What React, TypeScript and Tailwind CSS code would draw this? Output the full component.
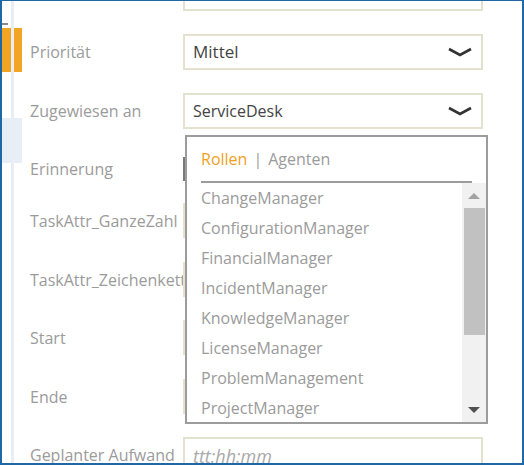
import React from "react";

const ROLES = [
  "ChangeManager",
  "ConfigurationManager",
  "FinancialManager",
  "IncidentManager",
  "KnowledgeManager",
  "LicenseManager",
  "ProblemManagement",
  "ProjectManager",
  "ServiceDesk",
];

function Chevron() {
  return (
    <svg width="24" height="10" viewBox="0 0 24 10" className="shrink-0">
      <polyline points="1,2 12,8 23,2" fill="none" stroke="#333" strokeWidth="2.6" />
    </svg>
  );
}

function Row({ label, mt, h = 36, children }: { label: string; mt: string; h?: number; children?: React.ReactNode }) {
  return (
    <div className={`flex shrink-0 items-center ${mt}`} style={{ height: h }}>
      <div className="w-[161px] shrink-0 overflow-hidden whitespace-nowrap pl-[8px] text-[16px] text-[#9b9b9b]">
        {label}
      </div>
      {children}
    </div>
  );
}

export default function App() {
  return (
    <div
      className="relative flex h-[465px] w-[524px] overflow-hidden border-b-2 border-l-2 border-r-2 border-t border-[#1f68a5] bg-white"
      style={{ fontFamily: '"Open Sans", "Noto Sans", sans-serif' }}
    >
      {/* linke Leiste */}
      <div className="relative w-[20px] shrink-0">
        <div className="mt-[22px] h-[2px] w-[6px] bg-[#8a8a8a]" />
        <div className="mt-[3px] h-[44px] w-[20px] bg-[#f2a525]" />
        <div className="mt-[46px] h-[45px] w-[20px] bg-[#e7eef5]" />
        <div className="absolute bottom-0 left-[9px] top-0 w-[3px] bg-[#e7eef5]" />
      </div>

      {/* Formular */}
      <div className="flex flex-1 flex-col">
        <div className="mt-[-26px] flex h-[36px] shrink-0">
          <div className="ml-[161px] h-[36px] w-[300px] border-2 border-[#e4e1cf]" />
        </div>
        <Row label="Priorität" mt="mt-[23px]">
          <div className="flex h-[36px] w-[300px] items-center justify-between border-2 border-[#e4e1cf] pl-[8px] pr-[9px] text-[17px] text-[#444]">
            <span>Mittel</span>
            <Chevron />
          </div>
        </Row>
        <Row label="Zugewiesen an" mt="mt-[23px]">
          <div className="flex h-[36px] w-[300px] items-center justify-between border-2 border-[#e4e1cf] pl-[8px] pr-[9px] text-[16px] text-[#444]">
            <span>ServiceDesk</span>
            <Chevron />
          </div>
        </Row>
        <Row label="Erinnerung" mt="mt-[22px]">
          <div className="h-[24px] w-[120px] border-2 border-[#7a7a7a]" />
        </Row>
        <Row label="TaskAttr_GanzeZahl" mt="mt-[16px]" h={35}>
          <div className="h-[35px] w-[300px] border-2 border-[#e4e1cf]" />
        </Row>
        <Row label="TaskAttr_Zeichenkette" mt="mt-[24px]" h={35}>
          <div className="h-[35px] w-[300px] border-2 border-[#e4e1cf]" />
        </Row>
        <Row label="Start" mt="mt-[23px]" h={35}>
          <div className="h-[35px] w-[300px] border-2 border-[#e4e1cf]" />
        </Row>
        <Row label="Ende" mt="mt-[24px]" h={35}>
          <div className="h-[35px] w-[300px] border-2 border-[#e4e1cf]" />
        </Row>
        <Row label="Geplanter Aufwand" mt="mt-[23px]">
          <div className="flex h-[36px] w-[300px] items-center border-2 border-[#e4e1cf] pl-[8px] pt-[2px] text-[18px] italic text-[#aaa]">
            ttt:hh:mm
          </div>
        </Row>
      </div>

      {/* Auswahl-Dropdown */}
      <div className="absolute left-[183px] top-[134px] flex h-[289px] w-[303px] flex-col border-2 border-[#9c9c9c] bg-white">
        <div className="mx-[14px] flex h-[46px] shrink-0 items-center border-b-2 border-[#9c9c9c] text-[16px]">
          <span className="text-[#f0a122]">Rollen</span>
          <span className="mx-[6px] text-[#9b9b9b]">|</span>
          <span className="text-[#9b9b9b]">Agenten</span>
        </div>
        <div className="flex min-h-0 flex-1">
          <ul className="flex-1 overflow-hidden pl-[14px]">
            {ROLES.map((r) => (
              <li key={r} className="flex h-[30px] items-center whitespace-nowrap text-[16px] text-[#9b9b9b]">
                {r}
              </li>
            ))}
          </ul>
          <div className="flex w-[24px] shrink-0 flex-col bg-[#f1f1f1]">
            <div className="flex h-[25px] items-center justify-center">
              <div className="h-0 w-0 border-x-[6px] border-b-[6px] border-x-transparent border-b-[#a3a3a3]" />
            </div>
            <div className="ml-[2px] mr-[1px] h-[127px] bg-[#c1c1c1]" />
            <div className="flex flex-1 items-end justify-center pb-[9px]">
              <div className="h-0 w-0 border-x-[6px] border-t-[6px] border-x-transparent border-t-[#505050]" />
            </div>
          </div>
        </div>
      </div>
    </div>
  );
}
